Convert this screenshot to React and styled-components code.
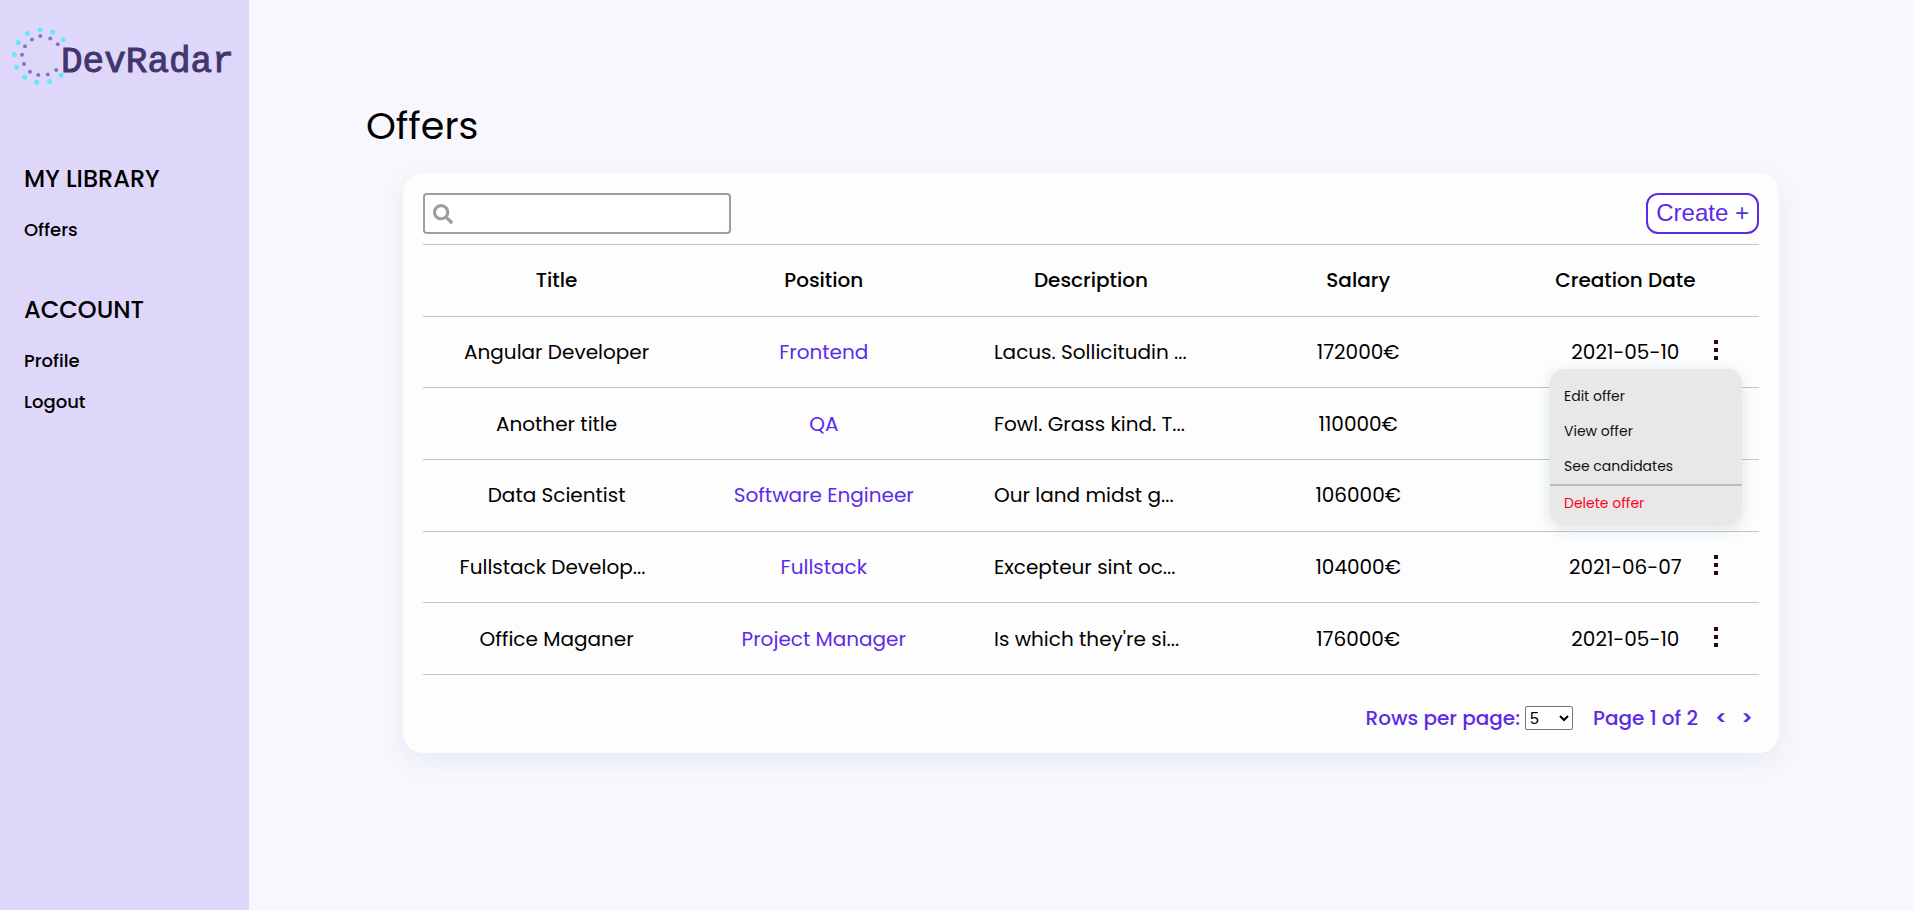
import React, { useState } from "react";
import styled, { createGlobalStyle } from "styled-components";
import { FaSearch } from "react-icons/fa";

const purple = "#5c2be8";

const GlobalStyle = createGlobalStyle`
  *, *::before, *::after { box-sizing: border-box; }
  body {
    margin: 0;
    background: #f8f7fd;
    color: #000;
    font-family: Poppins, Inter, "Open Sans", sans-serif;
  }
  a { color: inherit; text-decoration: none; }
  button { font: inherit; color: inherit; cursor: pointer; }
  h1, h2, ul { margin: 0; padding: 0; font-weight: inherit; list-style: none; }
`;

const Page = styled.div`
  display: flex;
  min-height: 100vh;
`;

const Sidebar = styled.aside`
  flex: 0 0 249px;
  background: #ded7f9;
`;

const LogoLink = styled.a`
  display: block;
  height: 110px;
  svg { display: block; }
`;

const Nav = styled.nav`
  display: flex;
  flex-direction: column;
  gap: 40px;
  padding: 49px 24px;
`;

const NavHeading = styled.h2`
  font-size: 24px;
  line-height: 40px;
  font-weight: 500;
`;

const NavList = styled.ul`
  padding-top: 10px;
`;

const NavItem = styled.li`
  font-size: 18px;
  line-height: 41px;
  font-weight: 500;
`;

const Main = styled.main`
  flex: 1;
  min-width: 0;
  padding: 96px 135px 40px 117px;
`;

const PageTitle = styled.h1`
  font-size: 38px;
  line-height: 60px;
  font-weight: 400;
`;

const Card = styled.section`
  margin: 17px 0 0 37px;
  padding: 20px;
  border-radius: 20px;
  background: #fdfdfd;
  box-shadow: 0 8px 24px rgba(80, 130, 170, 0.1);
`;

const Toolbar = styled.div`
  display: flex;
  justify-content: space-between;
  padding-bottom: 10px;
  border-bottom: 1px solid #c4c4c4;
`;

const SearchBox = styled.label`
  display: flex;
  align-items: center;
  gap: 8px;
  width: 308px;
  height: 41px;
  padding: 0 8px;
  border: 2px solid #9e9e9e;
  border-radius: 4px;
  background: #fff;
  color: #9e9e9e;
`;

const SearchInput = styled.input`
  flex: 1;
  min-width: 0;
  border: 0;
  outline: 0;
  background: transparent;
  font: inherit;
`;

const CreateButton = styled.button`
  height: 41px;
  padding: 0 8px 2px;
  border: 2px solid ${purple};
  border-radius: 12px;
  background: #fff;
  color: ${purple};
  font-family: "Liberation Sans", Arial, sans-serif;
  font-size: 24px;
`;

const Table = styled.table`
  width: 100%;
  height: 430px;
  table-layout: fixed;
  border-collapse: collapse;
  font-size: 20px;
  line-height: 30px;
`;

const HeadCell = styled.th`
  height: 71px;
  padding: 0;
  border-bottom: 1px solid #c4c4c4;
  font-weight: 500;
`;

const Cell = styled.td`
  padding: 0;
  border-bottom: 1px solid #c4c4c4;
  text-align: center;
  font-weight: 400;
  color: ${(p) => (p.$accent ? purple : "inherit")};
`;

const Excerpt = styled.div`
  width: 194px;
  margin: 0 auto;
  text-align: left;
  white-space: nowrap;
`;

const DateLine = styled.div`
  display: grid;
  grid-template-columns: 1fr auto 1fr;
  align-items: center;
`;

const Actions = styled.div`
  grid-column: 3;
  justify-self: end;
  position: relative;
  margin: 0 35px 4px 0;
`;

const KebabButton = styled.button`
  display: flex;
  flex-direction: column;
  align-items: center;
  gap: 4px;
  width: 16px;
  padding: 0;
  border: 0;
  background: none;
`;

const Dot = styled.span`
  width: 4px;
  height: 4px;
  background: #2a0a22;
`;

const Menu = styled.div`
  position: absolute;
  z-index: 2;
  top: 29px;
  right: -18px;
  width: 192px;
  padding: 10px 0 4px;
  border-radius: 14px;
  background: #e8e8e8;
  box-shadow: 0 4px 16px rgba(80, 130, 170, 0.2);
`;

const MenuItem = styled.button`
  display: block;
  width: 100%;
  padding: 0 14px;
  border: 0;
  border-top: ${(p) => (p.$danger ? "2px solid #bdbdbd" : "0")};
  background: none;
  color: ${(p) => (p.$danger ? "#ff0022" : "#111")};
  font-size: 14px;
  line-height: 35px;
  font-weight: 400;
  text-align: left;
`;

const Pager = styled.div`
  display: flex;
  align-items: center;
  justify-content: flex-end;
  padding: 28px 6px 0 0;
  color: ${purple};
  font-size: 20px;
  line-height: 30px;
  font-weight: 500;
`;

const RowsSelect = styled.select`
  width: 48px;
  height: 24px;
  margin: 0 20px 0 5px;
  border: 1px solid #767676;
  border-radius: 2px;
  background: #fff;
  color: #000;
  font-family: "Liberation Sans", Arial, sans-serif;
  font-size: 16px;
`;

const Steps = styled.div`
  display: flex;
  gap: 14px;
  margin-left: 17px;
`;

const StepButton = styled.button`
  width: 12px;
  padding: 0;
  border: 0;
  background: none;
  font-weight: 600;
`;

const outerDots = [
  [40, 29.7], [52.7, 32], [63, 39.8], [27.3, 33.5], [18.2, 42.4], [14.3, 54.6],
  [16.6, 67.2], [24.8, 77.3], [36.7, 82.3], [49.7, 81.6], [61, 75.2],
];
const innerDots = [
  [40.3, 36], [50.3, 38.4], [57.8, 44.2], [32, 39.6], [25, 46.2], [22, 54.7],
  [24, 64], [30, 71.8], [38.3, 75], [47.8, 74.4], [56.2, 70],
];

function Logo() {
  return (
    <svg width="249" height="110" viewBox="0 0 249 110" role="img" aria-label="DevRadar">
      {outerDots.map(([x, y]) => (
        <circle key={x} cx={x} cy={y} r="2.5" fill="#66e8fb" />
      ))}
      {innerDots.map(([x, y]) => (
        <circle key={x} cx={x} cy={y} r="2" fill="#7f74cf" />
      ))}
      <text
        x="61"
        y="72"
        fill="#43366f"
        stroke="#43366f"
        strokeWidth="1"
        fontFamily="'Liberation Mono', monospace"
        fontSize="36"
      >
        DevRadar
      </text>
    </svg>
  );
}

const groups = [
  { title: "MY LIBRARY", links: ["Offers"] },
  { title: "ACCOUNT", links: ["Profile", "Logout"] },
];

const columns = ["Title", "Position", "Description", "Salary", "Creation Date"];

const offers = [
  ["Angular Developer", "Frontend", "Lacus. Sollicitudin ...", "172000€", "2021-05-10"],
  ["Another title", "QA", "Fowl. Grass kind. T...", "110000€", ""],
  ["Data Scientist", "Software Engineer", "Our land midst g...", "106000€", ""],
  ["Fullstack Develop...", "Fullstack", "Excepteur sint oc...", "104000€", "2021-06-07"],
  ["Office Maganer", "Project Manager", "Is which they're si...", "176000€", "2021-05-10"],
];

function OfferMenu() {
  return (
    <Menu>
      <MenuItem>Edit offer</MenuItem>
      <MenuItem>View offer</MenuItem>
      <MenuItem>See candidates</MenuItem>
      <MenuItem $danger>Delete offer</MenuItem>
    </Menu>
  );
}

function OfferRow({ offer, open, onToggle }) {
  const [title, position, description, salary, date] = offer;
  return (
    <tr>
      <Cell>{title.endsWith("...") ? <Excerpt>{title}</Excerpt> : title}</Cell>
      <Cell $accent>{position}</Cell>
      <Cell>
        <Excerpt>{description}</Excerpt>
      </Cell>
      <Cell>{salary}</Cell>
      <Cell>
        {date && (
          <DateLine>
            <span />
            <span>{date}</span>
            <Actions>
              <KebabButton aria-label={`Actions for ${title}`} aria-expanded={open} onClick={onToggle}>
                <Dot />
                <Dot />
                <Dot />
              </KebabButton>
              {open && <OfferMenu />}
            </Actions>
          </DateLine>
        )}
      </Cell>
    </tr>
  );
}

export default function App() {
  const [openRow, setOpenRow] = useState(0);
  const [rows, setRows] = useState("5");
  return (
    <>
      <GlobalStyle />
      <Page>
        <Sidebar>
          <LogoLink href="#">
            <Logo />
          </LogoLink>
          <Nav>
            {groups.map((group) => (
              <div key={group.title}>
                <NavHeading>{group.title}</NavHeading>
                <NavList>
                  {group.links.map((link) => (
                    <NavItem key={link}>
                      <a href="#">{link}</a>
                    </NavItem>
                  ))}
                </NavList>
              </div>
            ))}
          </Nav>
        </Sidebar>
        <Main>
          <PageTitle>Offers</PageTitle>
          <Card>
            <Toolbar>
              <SearchBox>
                <FaSearch size={20} />
                <SearchInput type="text" aria-label="Search offers" />
              </SearchBox>
              <CreateButton>Create +</CreateButton>
            </Toolbar>
            <Table>
              <thead>
                <tr>
                  {columns.map((name) => (
                    <HeadCell key={name} scope="col">{name}</HeadCell>
                  ))}
                </tr>
              </thead>
              <tbody>
                {offers.map((offer, i) => (
                  <OfferRow
                    key={offer[0]}
                    offer={offer}
                    open={openRow === i}
                    onToggle={() => setOpenRow(openRow === i ? -1 : i)}
                  />
                ))}
              </tbody>
            </Table>
            <Pager>
              <label htmlFor="rows">Rows per page:</label>
              <RowsSelect id="rows" value={rows} onChange={(e) => setRows(e.target.value)}>
                <option>5</option>
                <option>10</option>
                <option>20</option>
              </RowsSelect>
              <span>Page 1 of 2</span>
              <Steps>
                <StepButton aria-label="Previous page">&lt;</StepButton>
                <StepButton aria-label="Next page">&gt;</StepButton>
              </Steps>
            </Pager>
          </Card>
        </Main>
      </Page>
    </>
  );
}
